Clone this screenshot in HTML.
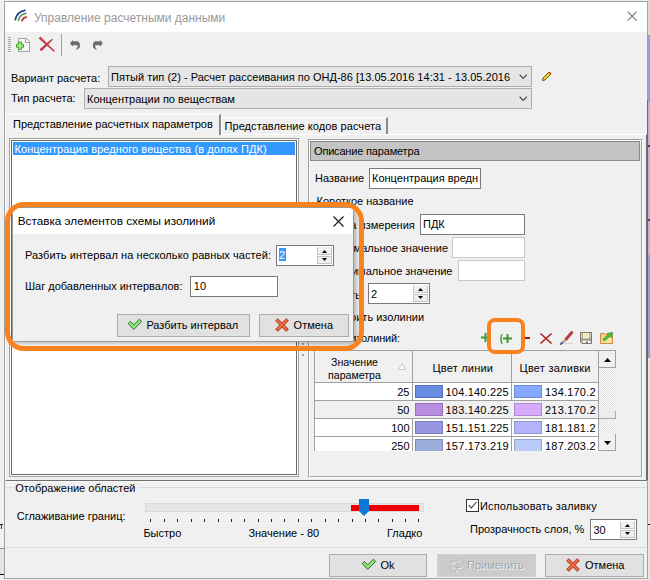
<!DOCTYPE html><html><head><meta charset="utf-8"><style>
html,body{margin:0;padding:0;}
body{width:650px;height:580px;position:relative;overflow:hidden;background:#f0f0f0;font-family:"Liberation Sans",sans-serif;}
.t{position:absolute;white-space:nowrap;}
svg{position:absolute;overflow:visible;}
</style></head><body>
<div style="position:absolute;left:648px;top:0px;width:2px;height:35px;background:#dcdcdc"></div>
<div style="position:absolute;left:648px;top:35px;width:2px;height:67px;background:#90a0d8"></div>
<div style="position:absolute;left:648px;top:102px;width:2px;height:153px;background:#d0a8d0"></div>
<div style="position:absolute;left:648px;top:255px;width:2px;height:103px;background:#90a0d8"></div>
<div style="position:absolute;left:648px;top:358px;width:2px;height:222px;background:#e6e6e6"></div>
<div style="position:absolute;left:648px;top:145px;width:2px;height:2px;background:#4040a0"></div>
<div style="position:absolute;left:648px;top:219px;width:2px;height:2px;background:#4040a0"></div>
<div style="position:absolute;left:648px;top:524px;width:2px;height:1px;background:#000"></div>
<div style="position:absolute;left:0px;top:524px;width:3px;height:5px;background:#202020;clip-path:polygon(0 0,100% 0,100% 20%,60% 20%,60% 100%,30% 100%,30% 20%,0 20%)"></div>
<div style="position:absolute;left:0px;top:548px;width:4px;height:1px;background:#909090"></div>
<div style="position:absolute;left:0px;top:549px;width:4px;height:25px;background:#e4e4e4"></div>
<div style="position:absolute;left:0px;top:574px;width:4px;height:1px;background:#000"></div>
<div style="position:absolute;left:4px;top:1px;width:644px;height:578px;box-sizing:border-box;border:1px solid #a2a2a2;background:#f0f0f0"></div>
<div style="position:absolute;left:647px;top:100px;width:1px;height:380px;background:#6a6a78"></div>
<div style="position:absolute;left:5px;top:2px;width:642px;height:30px;background:#ffffff"></div>
<svg style="left:0px;top:0px" width="40" height="30" viewBox="0 0 40 30">
<path d="M15.3 19.6 A12 12 0 0 1 24.8 10.3" stroke="#2d3d8c" stroke-width="1.8" fill="none" stroke-linecap="round"/>
<path d="M18.5 20.3 A8.8 8.8 0 0 1 25.7 13.4" stroke="#55a055" stroke-width="1.8" fill="none" stroke-linecap="round"/>
<path d="M22 20.7 A5.2 5.2 0 0 1 26.2 17.1" stroke="#c23535" stroke-width="1.8" fill="none" stroke-linecap="round"/>
</svg>
<div class="t" style="left:34px;top:11.85px;font-size:12px;line-height:12px;color:#9a9a9a;">Управление расчетными данными</div>
<svg style="left:625px;top:9px" width="14" height="14" viewBox="625 9 14 14"><path d="M627.6 11.6 L636.6 20.6 M636.6 11.6 L627.6 20.6" stroke="#707070" stroke-width="1.05"/></svg>
<div style="position:absolute;left:8px;top:37px;width:3px;height:1px;background:#a8a8a8"></div>
<div style="position:absolute;left:8px;top:39px;width:3px;height:1px;background:#a8a8a8"></div>
<div style="position:absolute;left:8px;top:41px;width:3px;height:1px;background:#a8a8a8"></div>
<div style="position:absolute;left:8px;top:43px;width:3px;height:1px;background:#a8a8a8"></div>
<div style="position:absolute;left:8px;top:45px;width:3px;height:1px;background:#a8a8a8"></div>
<div style="position:absolute;left:8px;top:47px;width:3px;height:1px;background:#a8a8a8"></div>
<div style="position:absolute;left:8px;top:49px;width:3px;height:1px;background:#a8a8a8"></div>
<div style="position:absolute;left:8px;top:51px;width:3px;height:1px;background:#a8a8a8"></div>
<svg style="left:14px;top:36px" width="18" height="18" viewBox="14 36 18 18">
<path d="M18.5 38.5 H26.5 L29.5 41.5 V51.5 H18.5 Z" fill="#fafafa" stroke="#a0a0a0"/>
<path d="M25.5 38.5 V42.5 H29.5" fill="none" stroke="#a0a0a0"/>
<path d="M18.5 42 H21.5 V44.25 H23.5 V47.25 H21.5 V49.5 H18.5 V47.25 H16.5 V44.25 H18.5 Z" fill="#9cee80" stroke="#4a9a3a"/>
</svg>
<svg style="left:36px;top:35px" width="22" height="20" viewBox="36 35 22 20">
<path d="M40.4 36.55 L55.0 51.0 L54.0 52.0 L38.6 38.45 Z" fill="#c8404a"/>
<path d="M52.1 38.86 L52.9 39.74 L41.45 51.33 L39.55 49.27 Z" fill="#b83844"/>
</svg>
<div style="position:absolute;left:61px;top:34px;width:1px;height:22px;background:#a0a0a0"></div>
<svg style="left:67px;top:37px" width="16" height="16" viewBox="0 0 16 16">
<path d="M3 6.2 L5.8 3 V4.2 H10.8 L12.8 6.2 V10.4 L9.8 12.8 L9 12.2 L10.6 10 V8.9 L10.3 8.3 H5.8 V9.8 Z" fill="#6c6c6c"/>
</svg>
<svg style="left:89px;top:37px" width="16" height="16" viewBox="0 0 16 16">
<g transform="translate(16.8,0) scale(-1,1)"><path d="M3 6.2 L5.8 3 V4.2 H10.8 L12.8 6.2 V10.4 L9.8 12.8 L9 12.2 L10.6 10 V8.9 L10.3 8.3 H5.8 V9.8 Z" fill="#6c6c6c"/></g>
</svg>
<div class="t" style="left:11px;top:72.69px;font-size:11px;line-height:11px;color:#000;">Вариант расчета:</div>
<div style="position:absolute;left:108px;top:66px;width:424px;height:21px;box-sizing:border-box;border:1px solid #adadad;background:#e5e5e5"></div>
<div class="t" style="left:111px;top:72.19px;font-size:11px;line-height:11px;color:#000;letter-spacing:0.02px">Пятый тип (2) - Расчет рассеивания по ОНД-86 [13.05.2016 14:31 - 13.05.2016</div>
<svg style="left:519px;top:74px" width="9" height="6" viewBox="0 0 9 6"><path d="M0.6 0.8 L4.2 4.4 L7.8 0.8" stroke="#505050" stroke-width="1.25" fill="none"/></svg>
<svg style="left:541px;top:71px" width="11" height="11" viewBox="0 0 11 11">
<path d="M1.5 9.5 L2 7 L8 1 L10 3 L4 9 Z" fill="#f0d020" stroke="#6a5a10" stroke-width="1"/>
<path d="M8 1 L10 3" stroke="#c03030" stroke-width="1.5"/>
</svg>
<div class="t" style="left:11px;top:93.19px;font-size:11px;line-height:11px;color:#000;">Тип расчета:</div>
<div style="position:absolute;left:84px;top:88px;width:448px;height:21px;box-sizing:border-box;border:1px solid #adadad;background:#e5e5e5"></div>
<div class="t" style="left:87px;top:94.19px;font-size:11px;line-height:11px;color:#000;">Концентрации по веществам</div>
<svg style="left:519px;top:96px" width="9" height="6" viewBox="0 0 9 6"><path d="M0.6 0.8 L4.2 4.4 L7.8 0.8" stroke="#505050" stroke-width="1.25" fill="none"/></svg>
<div style="position:absolute;left:5px;top:134px;width:642px;height:347px;box-sizing:border-box;border-top:1px solid #ffffff;border-left:1px solid #fafafa;border-right:1px solid #6e6e6e;border-bottom:1px solid #6e6e6e;"></div>
<div style="position:absolute;left:5px;top:481px;width:641px;height:1px;background:#fafafa"></div>
<div style="position:absolute;left:5px;top:114px;width:216px;height:21px;box-sizing:border-box;border-left:1px solid #fff;border-top:1px solid #fff;border-right:2px solid #8a8a8a;background:#f0f0f0"></div>
<div class="t" style="left:13px;top:119.19px;font-size:11px;line-height:11px;color:#000;">Представление расчетных параметров</div>
<div style="position:absolute;left:221px;top:117px;width:167px;height:17px;box-sizing:border-box;border-left:1px solid #fff;border-top:1px solid #fff;border-right:2px solid #8a8a8a;background:#f0f0f0"></div>
<div class="t" style="left:224.5px;top:120.69px;font-size:11px;line-height:11px;color:#000;letter-spacing:0.07px">Представление кодов расчета</div>
<div style="position:absolute;left:9px;top:138px;width:290px;height:339px;box-sizing:border-box;border:1px solid #a0a0a0;background:#fff"></div>
<div style="position:absolute;left:11px;top:140px;width:286px;height:335px;box-sizing:border-box;border:1px solid #696969;background:#fff"></div>
<div style="position:absolute;left:13px;top:142px;width:282px;height:13px;background:#3399ff"></div>
<div class="t" style="left:14.5px;top:144.19px;font-size:11px;line-height:11px;color:#fff;letter-spacing:0.08px">Концентрация вредного вещества (в долях ПДК)</div>
<div style="position:absolute;left:302px;top:343px;width:2px;height:2px;background:#a0a0a0"></div>
<div style="position:absolute;left:302px;top:354px;width:2px;height:2px;background:#a0a0a0"></div>
<div style="position:absolute;left:308px;top:139px;width:335px;height:339px;box-sizing:border-box;border-left:1px solid #a0a0a0;border-top:1px solid #a0a0a0;border-right:1px solid #fff;border-bottom:1px solid #fff"></div>
<div style="position:absolute;left:309px;top:140px;width:333px;height:337px;box-sizing:border-box;border-left:1px solid #fff;border-top:1px solid #fff;border-right:1px solid #a0a0a0;border-bottom:1px solid #a0a0a0"></div>
<div style="position:absolute;left:310px;top:141px;width:330px;height:20px;box-sizing:border-box;border:1px solid #8a8a8a;background:#c4c4c4"></div>
<div class="t" style="left:314px;top:146.19px;font-size:11px;line-height:11px;color:#000;letter-spacing:-0.18px">Описание параметра</div>
<div class="t" style="left:315px;top:173.19px;font-size:11px;line-height:11px;color:#000;">Название</div>
<div style="position:absolute;left:369px;top:168px;width:112px;height:21px;box-sizing:border-box;border:1px solid #7a7a7a;background:#fff"></div>
<div class="t" style="left:372px;top:172.89px;font-size:11px;line-height:11px;color:#000;">Концентрация вредн</div>
<div class="t" style="left:316.5px;top:196.19px;font-size:11px;line-height:11px;color:#000;">Короткое название</div>
<div class="t" style="left:114.80000000000001px;width:300px;text-align:right;top:219.69px;font-size:11px;line-height:11px;color:#000;">Единица измерения</div>
<div style="position:absolute;left:420px;top:214px;width:105px;height:21px;box-sizing:border-box;border:1px solid #7a7a7a;background:#fff"></div>
<div class="t" style="left:423px;top:218.89px;font-size:11px;line-height:11px;color:#000;">ПДК</div>
<div class="t" style="left:148px;width:300px;text-align:right;top:243.19px;font-size:11px;line-height:11px;color:#000;">Минимальное значение</div>
<div style="position:absolute;left:452px;top:237px;width:73px;height:21px;box-sizing:border-box;border:1px solid #c8c8c8;background:#fff"></div>
<div class="t" style="left:152.5px;width:300px;text-align:right;top:266.19px;font-size:11px;line-height:11px;color:#000;">Максимальное значение</div>
<div style="position:absolute;left:458px;top:260px;width:67px;height:21px;box-sizing:border-box;border:1px solid #c8c8c8;background:#fff"></div>
<div class="t" style="left:315px;top:289.69px;font-size:11px;line-height:11px;color:#000;">Точность</div>
<div style="position:absolute;left:368px;top:283px;width:62px;height:21px;box-sizing:border-box;border:1px solid #7a7a7a;background:#fff"></div>
<div class="t" style="left:371px;top:288.69px;font-size:11px;line-height:11px;color:#000;">2</div>
<div style="position:absolute;left:413px;top:285px;width:15px;height:8px;box-sizing:border-box;border:1px solid #c4c4c4;border-top-color:#f4f4f4;background:#f0f0f0"></div>
<div style="position:absolute;left:413px;top:294px;width:15px;height:8px;box-sizing:border-box;border:1px solid #c4c4c4;background:#f0f0f0"></div>
<svg style="left:418px;top:288px" width="5" height="3"><path d="M0 3 L2.5 0 L5 3 Z" fill="#000"/></svg>
<svg style="left:418px;top:296px" width="5" height="3"><path d="M0 0 L2.5 3 L5 0 Z" fill="#000"/></svg>
<div style="position:absolute;left:315px;top:313px;width:13px;height:13px;box-sizing:border-box;border:1px solid #333;background:#fff"></div>
<div class="t" style="left:331px;top:312.19px;font-size:11px;line-height:11px;color:#000;">Строить изолинии</div>
<div class="t" style="left:315px;top:332.89px;font-size:11px;line-height:11px;color:#000;letter-spacing:-0.14px">Схема изолиний:</div>
<svg style="left:481px;top:333px" width="9" height="9"><path d="M0 3.5 H9 V5.5 H0 Z M3.5 0 H5.5 V9 H3.5 Z" fill="#3a9a2a"/></svg>
<svg style="left:495px;top:329px" width="12" height="18" viewBox="495 328 12 18"><path d="M502.6 333.4 C501.4 333.4 501.2 334.2 501.2 335.2 V336.6 C501.2 337.4 500.8 337.8 500 337.8 C500.8 337.8 501.2 338.2 501.2 339 V340.6 C501.2 341.6 501.4 342.4 502.6 342.4" stroke="#3a9a2a" stroke-width="1.4" fill="none"/></svg>
<svg style="left:503px;top:334px" width="9" height="9"><path d="M0 3.5 H9 V5.5 H0 Z M3.5 0 H5.5 V9 H3.5 Z" fill="#3a9a2a"/></svg>
<div style="position:absolute;left:525px;top:337px;width:5px;height:2px;background:#a01818"></div>
<svg style="left:540px;top:333px" width="12" height="11"><path d="M0.5 0.5 L11.5 10.5 M11.5 0.5 L0.5 10.5" stroke="#b02020" stroke-width="1.6"/></svg>
<svg style="left:557px;top:329px" width="18" height="18" viewBox="557 329 18 18">
<path d="M564.5 343.5 H573" stroke="#d4d4d4" stroke-width="1"/>
<path d="M571.8 332.6 L565.8 339.4" stroke="#b83a42" stroke-width="3" stroke-linecap="round"/>
<path d="M565.6 339.6 L562.6 342.6" stroke="#c8b070" stroke-width="2.4"/>
<path d="M562.3 342.9 L560.6 344" stroke="#4a5a9a" stroke-width="2" stroke-linecap="round"/>
</svg>
<svg style="left:577px;top:329px" width="18" height="18" viewBox="577 329 18 18">
<path d="M580.5 332.5 H591.5 V343.5 H582 L580.5 342 Z" fill="#d4d4cc" stroke="#76766a"/>
<path d="M582 333 H590 V343 H582 Z" fill="#eeeeea"/>
<path d="M583 333 H589 V338 H583 Z" fill="#fdf4bc"/>
<path d="M584 334.5 H588 V337 H584 Z" fill="#f6e6a0"/>
<path d="M581 338.5 H591 V340.5 H581 Z" fill="#9e9886"/>
<path d="M583 341 H589.5 V343 H583 Z" fill="#ffffff"/>
<path d="M585.5 341.3 H588 V343 H585.5 Z" fill="#8a8a86"/>
<path d="M582.5 333 V343 M589.5 333 V341" stroke="#9a9a90" stroke-width="0.8"/>
</svg>
<svg style="left:597px;top:329px" width="18" height="18" viewBox="597 329 18 18">
<path d="M600.5 333.5 H604.5 L605.5 334.5 H612.5 V343.5 H600.5 Z" fill="#f6cf80" stroke="#d0883a"/>
<path d="M601 337.5 H612 V343 H601 Z" fill="#fbe39a"/>
<path d="M602.5 339.5 L608 335 L607 333.5 L612.5 332.3 L611.5 337.5 L610.2 336.3 L604.5 341 Z" fill="#4cc040" stroke="#2a8a2a" stroke-width="0.6"/>
</svg>
<div style="position:absolute;left:314px;top:350px;width:302px;height:1px;background:#a0a0a0"></div>
<div style="position:absolute;left:314px;top:350px;width:1px;height:101px;background:#a0a0a0"></div>
<div style="position:absolute;left:315px;top:351px;width:283px;height:100px;background:#fff"></div>
<div style="position:absolute;left:315px;top:351px;width:283px;height:31px;background:#f0f0f0"></div>
<div style="position:absolute;left:315px;top:382px;width:283px;height:1px;background:#a0a0a0"></div>
<div style="position:absolute;left:412px;top:351px;width:1px;height:100px;background:#a0a0a0"></div>
<div style="position:absolute;left:511px;top:351px;width:1px;height:100px;background:#a0a0a0"></div>
<div class="t" style="left:331px;top:357.03px;font-size:10.6px;line-height:10.6px;color:#000;">Значение</div>
<div class="t" style="left:328px;top:369.53px;font-size:10.6px;line-height:10.6px;color:#000;">параметра</div>
<svg style="left:398px;top:363px" width="8" height="7"><path d="M0.5 6.5 L4 0.5 L7.5 6.5 Z" fill="#fff" stroke="#c8c8c8"/></svg>
<div class="t" style="left:432.5px;top:362.69px;font-size:11px;line-height:11px;color:#000;letter-spacing:0.2px">Цвет линии</div>
<div class="t" style="left:519.5px;top:362.69px;font-size:11px;line-height:11px;color:#000;letter-spacing:0.25px">Цвет заливки</div>
<div style="position:absolute;left:315px;top:400px;width:283px;height:1px;background:#a0a0a0"></div>
<div class="t" style="left:315px;width:94.5px;text-align:right;top:387.4px;font-size:11px;line-height:11px">25</div>
<div style="position:absolute;left:415px;top:385px;width:28px;height:13px;box-sizing:border-box;border:1px solid rgb(85, 114, 184);background:rgb(104, 140, 225)"></div>
<div class="t" style="left:445.5px;top:387.49px;font-size:11px;line-height:11px;color:#000;letter-spacing:0.2px">104.140.225</div>
<div style="position:absolute;left:514px;top:385px;width:28px;height:13px;box-sizing:border-box;border:1px solid rgb(109, 139, 209);background:rgb(134, 170, 255)"></div>
<div class="t" style="left:545px;top:387.49px;font-size:11px;line-height:11px;color:#000;letter-spacing:0.2px">134.170.2</div>
<div style="position:absolute;left:315px;top:401px;width:283px;height:17px;background:#f0f0f0"></div>
<div style="position:absolute;left:315px;top:418px;width:283px;height:1px;background:#a0a0a0"></div>
<div class="t" style="left:315px;width:94.5px;text-align:right;top:405.4px;font-size:11px;line-height:11px">50</div>
<div style="position:absolute;left:415px;top:403px;width:28px;height:13px;box-sizing:border-box;border:1px solid rgb(150, 114, 184);background:rgb(183, 140, 225)"></div>
<div class="t" style="left:445.5px;top:405.49px;font-size:11px;line-height:11px;color:#000;letter-spacing:0.2px">183.140.225</div>
<div style="position:absolute;left:514px;top:403px;width:28px;height:13px;box-sizing:border-box;border:1px solid rgb(174, 139, 209);background:rgb(213, 170, 255)"></div>
<div class="t" style="left:545px;top:405.49px;font-size:11px;line-height:11px;color:#000;letter-spacing:0.2px">213.170.2</div>
<div style="position:absolute;left:315px;top:436px;width:283px;height:1px;background:#a0a0a0"></div>
<div class="t" style="left:315px;width:94.5px;text-align:right;top:423.4px;font-size:11px;line-height:11px">100</div>
<div style="position:absolute;left:415px;top:421px;width:28px;height:13px;box-sizing:border-box;border:1px solid rgb(123, 123, 184);background:rgb(151, 151, 225)"></div>
<div class="t" style="left:445.5px;top:423.49px;font-size:11px;line-height:11px;color:#000;letter-spacing:0.2px">151.151.225</div>
<div style="position:absolute;left:514px;top:421px;width:28px;height:13px;box-sizing:border-box;border:1px solid rgb(148, 148, 209);background:rgb(181, 181, 255)"></div>
<div class="t" style="left:545px;top:423.49px;font-size:11px;line-height:11px;color:#000;letter-spacing:0.2px">181.181.2</div>
<div style="position:absolute;left:315px;top:454px;width:283px;height:1px;background:#a0a0a0"></div>
<div class="t" style="left:315px;width:94.5px;text-align:right;top:441.4px;font-size:11px;line-height:11px">250</div>
<div style="position:absolute;left:415px;top:439px;width:28px;height:13px;box-sizing:border-box;border:1px solid rgb(128, 141, 179);background:rgb(157, 173, 219)"></div>
<div class="t" style="left:445.5px;top:441.49px;font-size:11px;line-height:11px;color:#000;letter-spacing:0.2px">157.173.219</div>
<div style="position:absolute;left:514px;top:439px;width:28px;height:13px;box-sizing:border-box;border:1px solid rgb(153, 166, 204);background:rgb(187, 203, 249)"></div>
<div class="t" style="left:545px;top:441.49px;font-size:11px;line-height:11px;color:#000;letter-spacing:0.2px">187.203.2</div>
<div style="position:absolute;left:314px;top:451px;width:302px;height:4px;background:#f0f0f0"></div>
<div style="position:absolute;left:599px;top:368px;width:16px;height:66px;background-color:#f7f7f7;background-image:repeating-conic-gradient(#e2e2e2 0 25%, #fafafa 0 50%);background-size:2px 2px"></div>
<div style="position:absolute;left:598px;top:351px;width:1px;height:100px;background:#a0a0a0"></div>
<div style="position:absolute;left:599px;top:351px;width:17px;height:17px;box-sizing:border-box;border-right:1px solid #a0a0a0;border-bottom:1px solid #a0a0a0;background:#f0f0f0"></div>
<svg style="left:604px;top:358px" width="7" height="4"><path d="M0 4 L3.5 0 L7 4 Z" fill="#000"/></svg>
<div style="position:absolute;left:599px;top:411px;width:17px;height:8px;box-sizing:border-box;border-right:1px solid #a8a8a8;border-bottom:1px solid #a8a8a8;background:#ececec"></div>
<div style="position:absolute;left:599px;top:434px;width:17px;height:17px;box-sizing:border-box;border-right:1px solid #a0a0a0;border-bottom:1px solid #a0a0a0;background:#f0f0f0"></div>
<svg style="left:604px;top:441px" width="7" height="4"><path d="M0 0 L3.5 4 L7 0 Z" fill="#000"/></svg>
<div style="position:absolute;left:599px;top:350px;width:17px;height:1px;background:#a0a0a0"></div>
<div style="position:absolute;left:6px;top:487px;width:641px;height:62px;box-sizing:border-box;border-top:1px solid #dcdcdc;"></div>
<div style="position:absolute;left:14px;top:484px;width:124px;height:8px;background:#f0f0f0"></div>
<div class="t" style="left:15.3px;top:483.39px;font-size:11px;line-height:11px;color:#000;">Отображение областей</div>
<div class="t" style="left:16.7px;top:510.89px;font-size:11px;line-height:11px;color:#000;">Сглаживание границ:</div>
<div style="position:absolute;left:145px;top:503px;width:279px;height:9px;box-sizing:border-box;border:1px solid #dadada;background:#e6e6e6"></div>
<div style="position:absolute;left:351px;top:505px;width:68px;height:6px;background:#ee0000"></div>
<svg style="left:359px;top:499px" width="10" height="17"><path d="M0 0 H10 V12 L5 17 L0 12 Z" fill="#0a78d7"/></svg>
<div style="position:absolute;left:150px;top:519px;width:1px;height:3px;background:#202020"></div>
<div style="position:absolute;left:164px;top:519px;width:1px;height:3px;background:#202020"></div>
<div style="position:absolute;left:177px;top:519px;width:1px;height:3px;background:#202020"></div>
<div style="position:absolute;left:191px;top:519px;width:1px;height:3px;background:#202020"></div>
<div style="position:absolute;left:204px;top:519px;width:1px;height:3px;background:#202020"></div>
<div style="position:absolute;left:218px;top:519px;width:1px;height:3px;background:#202020"></div>
<div style="position:absolute;left:231px;top:519px;width:1px;height:3px;background:#202020"></div>
<div style="position:absolute;left:244px;top:519px;width:1px;height:3px;background:#202020"></div>
<div style="position:absolute;left:258px;top:519px;width:1px;height:3px;background:#202020"></div>
<div style="position:absolute;left:271px;top:519px;width:1px;height:3px;background:#202020"></div>
<div style="position:absolute;left:284px;top:519px;width:1px;height:3px;background:#202020"></div>
<div style="position:absolute;left:298px;top:519px;width:1px;height:3px;background:#202020"></div>
<div style="position:absolute;left:311px;top:519px;width:1px;height:3px;background:#202020"></div>
<div style="position:absolute;left:325px;top:519px;width:1px;height:3px;background:#202020"></div>
<div style="position:absolute;left:338px;top:519px;width:1px;height:3px;background:#202020"></div>
<div style="position:absolute;left:352px;top:519px;width:1px;height:3px;background:#202020"></div>
<div style="position:absolute;left:365px;top:519px;width:1px;height:3px;background:#202020"></div>
<div style="position:absolute;left:378px;top:519px;width:1px;height:3px;background:#202020"></div>
<div style="position:absolute;left:392px;top:519px;width:1px;height:3px;background:#202020"></div>
<div style="position:absolute;left:405px;top:519px;width:1px;height:3px;background:#202020"></div>
<div style="position:absolute;left:418px;top:519px;width:1px;height:3px;background:#202020"></div>
<div class="t" style="left:143.4px;top:528.19px;font-size:11px;line-height:11px;color:#000;">Быстро</div>
<div class="t" style="left:248.4px;top:528.19px;font-size:11px;line-height:11px;color:#000;">Значение - 80</div>
<div class="t" style="left:387px;top:528.19px;font-size:11px;line-height:11px;color:#000;">Гладко</div>
<div style="position:absolute;left:466px;top:499px;width:13px;height:13px;box-sizing:border-box;border:1px solid #333;background:#fff"></div>
<svg style="left:467px;top:500px" width="11" height="11"><path d="M1.8 5.2 L4.3 8 L9.5 2" stroke="#333" stroke-width="1.1" fill="none"/></svg>
<div class="t" style="left:480px;top:500.69px;font-size:11px;line-height:11px;color:#000;letter-spacing:0.15px">Использовать заливку</div>
<div class="t" style="left:470px;top:524.39px;font-size:11px;line-height:11px;color:#000;">Прозрачность слоя, %</div>
<div style="position:absolute;left:590px;top:519px;width:47px;height:21px;box-sizing:border-box;border:1px solid #7a7a7a;background:#fff"></div>
<div class="t" style="left:593.5px;top:524.69px;font-size:11px;line-height:11px;color:#000;">30</div>
<div style="position:absolute;left:620px;top:521px;width:15px;height:8px;box-sizing:border-box;border:1px solid #c4c4c4;border-top-color:#f4f4f4;background:#f0f0f0"></div>
<div style="position:absolute;left:620px;top:530px;width:15px;height:8px;box-sizing:border-box;border:1px solid #c4c4c4;background:#f0f0f0"></div>
<svg style="left:625px;top:524px" width="5" height="3"><path d="M0 3 L2.5 0 L5 3 Z" fill="#000"/></svg>
<svg style="left:625px;top:532px" width="5" height="3"><path d="M0 0 L2.5 3 L5 0 Z" fill="#000"/></svg>
<div style="position:absolute;left:5px;top:547px;width:641px;height:1px;background:#dcdcdc"></div>
<div style="position:absolute;left:329px;top:554px;width:98px;height:23px;box-sizing:border-box;border:1px solid #adadad;background:#e1e1e1"></div>
<svg style="left:358px;top:555.2px" width="22" height="20" viewBox="-4 -4 22 20"><path d="M0.2 4.6 L2.3 2.5 L5.8 5.8 L11.5 0.2 L13.6 2.5 L5.8 10.4 Z" fill="#8ee878" stroke="#2f6a2f" stroke-width="1" stroke-linejoin="round"/></svg>
<div class="t" style="left:380.5px;top:560.29px;font-size:11px;line-height:11px;color:#000;">Ok</div>
<div style="position:absolute;left:437px;top:554px;width:99px;height:23px;box-sizing:border-box;border:1px solid #d0d0d0;background:#cccccc"></div>
<svg style="left:444px;top:554px" width="26" height="22" viewBox="444 554 26 22">
<path d="M450.5 562.5 L451.5 561 H457.8 V557.4 L463.6 561.4 L457.8 565.6 V563.5 H452 Z" fill="#d4d4d4" stroke="#b4b4b4" stroke-width="0.8"/>
<path d="M463.6 566 L462.6 567.5 H455.6 V564 L449.2 568.2 L455.6 572.4 V569.5 H462 Z" fill="#d4d4d4" stroke="#b4b4b4" stroke-width="0.8"/>
<path d="M451.5 563.8 H456 M456.6 570.5 L457 572.5 M458.5 569.8 L463.5 567" stroke="#fff" stroke-width="0.9"/>
</svg>
<div class="t" style="left:467px;top:560.29px;font-size:11px;line-height:11px;color:#a4a4a4;text-shadow:1px 1px 0 #f4f4f4">Применить</div>
<div style="position:absolute;left:545px;top:554px;width:99px;height:23px;box-sizing:border-box;border:1px solid #adadad;background:#e1e1e1"></div>
<svg style="left:565.3px;top:557px" width="16" height="16" viewBox="-2 -2 16 16"><path d="M0.5 0.5 L11.5 11.5 M11.5 0.5 L0.5 11.5" stroke="#9a3020" stroke-width="3.8"/><path d="M0.9 0.9 L11.1 11.1 M11.1 0.9 L0.9 11.1" stroke="#ee6a42" stroke-width="2.4"/></svg>
<div class="t" style="left:585px;top:560.29px;font-size:11px;line-height:11px;color:#000;">Отмена</div>
<div style="position:absolute;left:12px;top:207px;width:342px;height:135px;box-sizing:border-box;border:1px solid #9a9a9a;background:#f0f0f0;box-shadow:2px 2px 5px rgba(0,0,0,0.28)"></div>
<div style="position:absolute;left:13px;top:208px;width:340px;height:26px;background:#fff"></div>
<div class="t" style="left:17.7px;top:214.86px;font-size:11.75px;line-height:11.75px;color:#000;">Вставка элементов схемы изолиний</div>
<svg style="left:333px;top:216px" width="11" height="11" viewBox="0 0 11 11"><path d="M0.5 0.5 L10.5 10.5 M10.5 0.5 L0.5 10.5" stroke="#111" stroke-width="1.1"/></svg>
<div class="t" style="left:25px;top:250.29px;font-size:11px;line-height:11px;color:#000;letter-spacing:0.07px">Разбить интервал на несколько равных частей:</div>
<div style="position:absolute;left:276px;top:245px;width:58px;height:21px;box-sizing:border-box;border:1px solid #7a7a7a;background:#fff"></div>
<div style="position:absolute;left:279px;top:248px;width:7px;height:13px;background:#3399ff"></div>
<div class="t" style="left:279px;top:249.89px;font-size:11px;line-height:11px;color:#fff;">2</div>
<div style="position:absolute;left:317px;top:247px;width:15px;height:8px;box-sizing:border-box;border:1px solid #c4c4c4;border-top-color:#f4f4f4;background:#f0f0f0"></div>
<div style="position:absolute;left:317px;top:256px;width:15px;height:8px;box-sizing:border-box;border:1px solid #c4c4c4;background:#f0f0f0"></div>
<svg style="left:322px;top:250px" width="5" height="3"><path d="M0 3 L2.5 0 L5 3 Z" fill="#000"/></svg>
<svg style="left:322px;top:258px" width="5" height="3"><path d="M0 0 L2.5 3 L5 0 Z" fill="#000"/></svg>
<div class="t" style="left:25px;top:280.69px;font-size:11px;line-height:11px;color:#000;">Шаг добавленных интервалов:</div>
<div style="position:absolute;left:190px;top:276px;width:88px;height:21px;box-sizing:border-box;border:1px solid #7a7a7a;background:#fff"></div>
<div class="t" style="left:193.8px;top:281.19px;font-size:11px;line-height:11px;color:#000;">10</div>
<div style="position:absolute;left:117px;top:314px;width:133px;height:23px;box-sizing:border-box;border:1px solid #adadad;background:#e1e1e1"></div>
<svg style="left:124px;top:315px" width="22" height="20" viewBox="-4 -4 22 20"><path d="M0.2 4.6 L2.3 2.5 L5.8 5.8 L11.5 0.2 L13.6 2.5 L5.8 10.4 Z" fill="#8ee878" stroke="#2f6a2f" stroke-width="1" stroke-linejoin="round"/></svg>
<div class="t" style="left:146.4px;top:320.29px;font-size:11px;line-height:11px;color:#000;">Разбить интервал</div>
<div style="position:absolute;left:259px;top:314px;width:90px;height:23px;box-sizing:border-box;border:1px solid #adadad;background:#e1e1e1"></div>
<svg style="left:274px;top:317px" width="16" height="16" viewBox="-2 -2 16 16"><path d="M0.5 0.5 L11.5 11.5 M11.5 0.5 L0.5 11.5" stroke="#9a3020" stroke-width="3.8"/><path d="M0.9 0.9 L11.1 11.1 M11.1 0.9 L0.9 11.1" stroke="#ee6a42" stroke-width="2.4"/></svg>
<div class="t" style="left:293.6px;top:320.29px;font-size:11px;line-height:11px;color:#000;">Отмена</div>
<div style="position:absolute;left:5px;top:202px;width:359px;height:149px;box-sizing:border-box;border:5px solid #f9821f;border-radius:19px"></div>
<div style="position:absolute;left:487px;top:318px;width:38px;height:36px;box-sizing:border-box;border:4.7px solid #f9821f;border-radius:8px"></div>
</body></html>
